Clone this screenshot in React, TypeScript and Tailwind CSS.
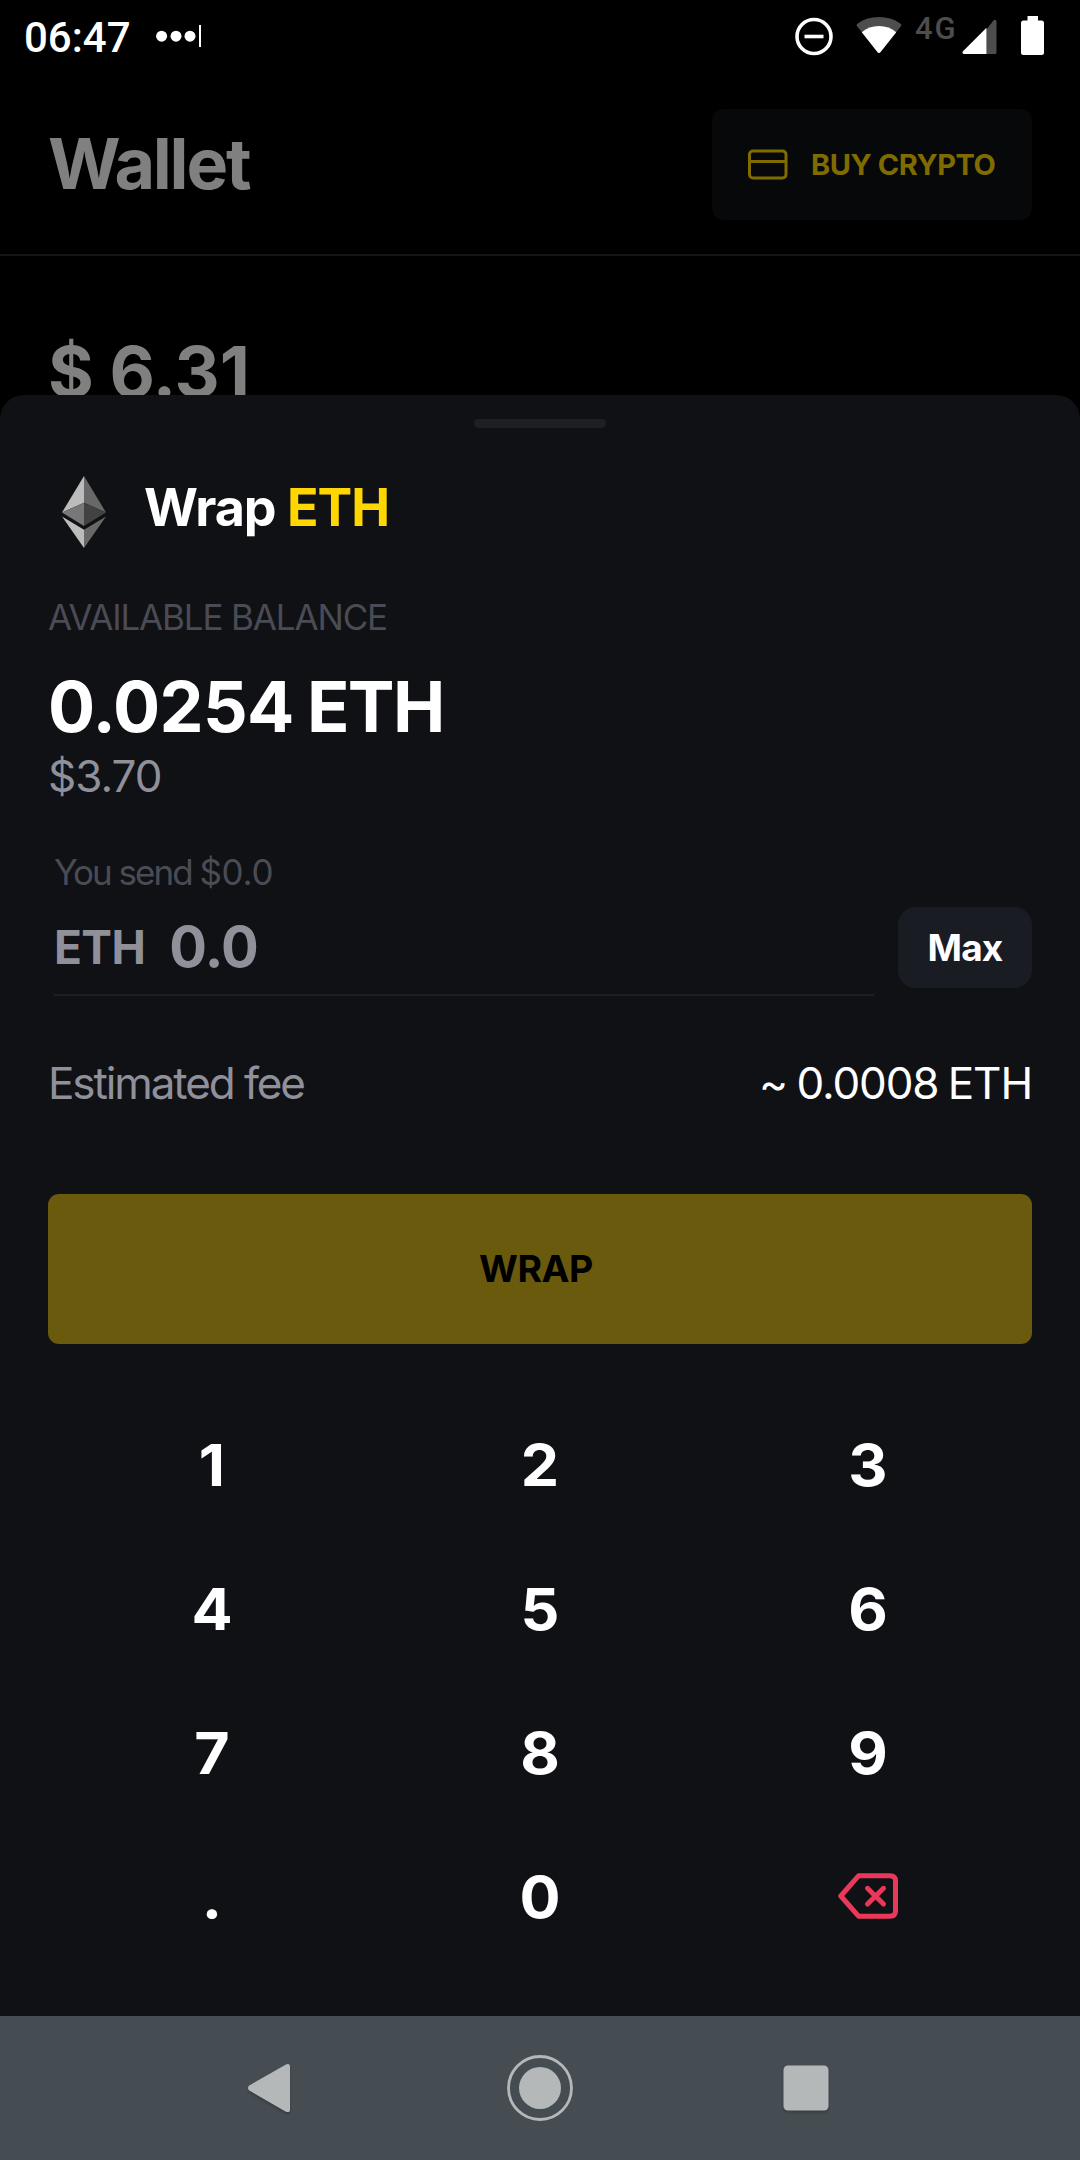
const keys = ["1", "2", "3", "4", "5", "6", "7", "8", "9", ".", "0"];

export default function App() {
  return (
    <div className="flex h-[2160px] w-[1080px] flex-col overflow-hidden bg-black font-[Inter,sans-serif] text-white">
      <div className="h-[395px] shrink-0">
        <StatusBar />
        <header className="flex h-[181px] items-center justify-between border-b-2 border-[#161616] px-12">
          <h1 className="pb-0.5 text-[70px] leading-[84px] font-bold tracking-[-2.2px] text-[#808080]">
            Wallet
          </h1>
          <button className="flex h-[111px] w-80 items-center rounded-xl bg-[#060809] pl-9 text-[#806b00]">
            <CardIcon />
            <span className="ml-[23px] text-[29px] leading-9 font-bold tracking-[-0.45px] whitespace-nowrap">
              BUY CRYPTO
            </span>
          </button>
        </header>
        <p className="mt-[74px] px-12 text-[70px] leading-[84px] font-bold text-[#808080] [word-spacing:-1px]">
          $ 6.31
        </p>
      </div>
      <WrapSheet />
      <NavBar />
    </div>
  );
}

function StatusBar() {
  return (
    <div className="flex h-[75px] items-start justify-between pt-4 pr-9 pl-6 font-[Roboto,sans-serif] font-medium">
      <div className="flex">
        <span className="text-[42px] leading-11">06:47</span>
        <svg className="ml-[25px]" width="46" height="40" fill="white">
          <circle cx="5.6" cy="20.2" r="5.5" />
          <circle cx="20" cy="20.2" r="5.5" />
          <circle cx="34" cy="20.2" r="5.5" />
          <rect x="43" y="9" width="2" height="22" />
        </svg>
      </div>
      <div className="flex items-start">
        {/* do not disturb */}
        <svg width="38" height="40" fill="none" stroke="white">
          <circle cx="19" cy="20.5" r="17" strokeWidth="3.6" />
          <path d="M9.5 20.5h19" strokeWidth="3.6" />
        </svg>
        {/* wifi */}
        <svg className="ml-[23px]" width="46" height="40">
          <path
            d="M1.3 10.5Q-.2 8.7 1.8 7.4Q11 1 23 1t21.2 6.4q2 1.3.5 3.1L24.4 36.3q-1.4 1.5-2.8 0z"
            fill="#4d4d4d"
          />
          <path
            d="M5.8 16.2Q13 10 23 10t17.2 6.2L24.4 36.3q-1.4 1.5-2.8 0z"
            fill="white"
          />
        </svg>
        <span className="ml-[13px] w-11 text-[31px] leading-[26px] tracking-[2px] text-[#4d4d4d]">
          4G
        </span>
        {/* signal */}
        <svg className="ml-[3px]" width="35" height="40">
          <path
            d="M24.5 13.5L31 5q3-2.5 3.5.5V36.5q0 1.5-1.5 1.5H24.5z"
            fill="#4d4d4d"
          />
          <path d="M24.5 11.8V38H2Q-.5 37.5 1 35.3z" fill="white" />
        </svg>
        {/* battery */}
        <svg className="ml-6" width="23" height="40" fill="white">
          <rect x="6.5" width="10.5" height="8" />
          <rect y="4.5" width="23" height="34.5" rx="2.5" />
        </svg>
      </div>
    </div>
  );
}

function WrapSheet() {
  return (
    <section className="relative flex h-[1621px] shrink-0 flex-col rounded-t-3xl bg-[#101114] px-12 pt-6">
      <div className="h-[9px] w-[132px] shrink-0 self-center rounded-[5px] bg-[#1e1f24]" />

      <div className="mt-12 flex h-[72px] items-center gap-[38px] pl-3.5">
        <EthIcon />
        <h2 className="pb-2 text-[52px] leading-[64px] font-bold tracking-[-1px]">
          Wrap <span className="text-[#ffd600]">ETH</span>
        </h2>
      </div>

      <p className="mt-[49px] text-[35px] leading-10 tracking-[-1.15px] text-[#4a4b54]">
        AVAILABLE BALANCE
      </p>
      <p className="mt-7 text-[70px] leading-[84px] font-bold">
        <span className="tracking-[-0.7px]">0.0254</span>
        <span className="tracking-[-1.7px] [word-spacing:-1.5px]"> ETH</span>
      </p>
      <p className="mt-px text-[44px] leading-[52px] tracking-[-1px] text-[#8f909a]">
        $3.70
      </p>

      <div className="mt-[50px] flex items-end justify-between pl-1.5">
        <div className="h-[144px] w-[820px] border-b-2 border-[#1e1f24]">
          <p className="text-[35px] leading-10 text-[#4a4b54]">
            <span className="tracking-[-2px]">You send </span>
            <span className="tracking-[-0.3px]">$0.0</span>
          </p>
          <div className="flex h-[102px] items-center pt-2 font-bold text-[#8f909a]">
            <span className="text-[46px] leading-[56px] tracking-[-0.6px]">
              ETH
            </span>
            <span className="ml-6 text-[56px] leading-[64px] tracking-[-0.7px]">
              0.0
            </span>
          </div>
        </div>
        <button className="mb-2 h-[81px] w-[134px] rounded-[18px] bg-[#1a1c24] text-[37px] font-bold tracking-[-0.8px]">
          Max
        </button>
      </div>

      <div className="mt-[61px] flex justify-between text-[44px] leading-[52px]">
        <span className="tracking-[-2.1px] text-[#8f909a]">Estimated fee</span>
        <span className="tracking-[-1.1px] [word-spacing:-2px]">
          ~ 0.0008 ETH
        </span>
      </div>

      <button className="mt-[85px] h-[150px] shrink-0 rounded-[11px] bg-[#695a0e] pr-2 text-[37.5px] font-bold tracking-[-0.5px] text-black">
        WRAP
      </button>

      <div className="mt-[49px] grid h-[576px] grid-cols-3 grid-rows-4">
        {keys.map((key) => (
          <button
            key={key}
            className="flex scale-x-105 items-center justify-center text-[58px] font-bold"
          >
            {key}
          </button>
        ))}
        <button className="flex items-center justify-center pb-0.5">
          <BackspaceIcon />
        </button>
      </div>
    </section>
  );
}

function NavBar() {
  return (
    <nav className="h-36 shrink-0 bg-[#454d52]">
      <svg width="1080" height="144" fill="#b4b8b9">
        <g className="drop-shadow-[0_2px_1px_rgba(0,0,0,0.2)]">
          <path d="M249.3 69.5L285.5 48.7Q290 46.7 290 51V93.2Q290 97.5 285.5 95.4L249.3 74.5Q246.5 72 249.3 69.5z" />
          <rect x="783.5" y="49.5" width="45" height="45" rx="4.5" />
        </g>
        <circle cx="540" cy="72" r="21" />
        <circle
          cx="540"
          cy="72"
          r="31.5"
          fill="none"
          stroke="#b4b8b9"
          strokeWidth="2.8"
        />
      </svg>
    </nav>
  );
}

function CardIcon() {
  return (
    <svg width="40" height="32" fill="none" stroke="currentColor" strokeWidth="3">
      <rect x="1.5" y="2" width="36.5" height="27" rx="3.5" />
      <path d="M1.5 12.5h36.5" />
    </svg>
  );
}

function EthIcon() {
  return (
    <svg width="44" height="72" viewBox="0 0 44 72">
      <path d="M22 0L0 36.5 22 26.7z" fill="#bcbcbc" />
      <path d="M22 0L44 36.5 22 26.7z" fill="#686868" />
      <path d="M0 36.5L22 26.7V50z" fill="#777777" />
      <path d="M44 36.5L22 26.7V50z" fill="#424242" />
      <path d="M0 40.5L22 53.7V72z" fill="#bcbcbc" />
      <path d="M44 40.5L22 53.7V72z" fill="#686868" />
    </svg>
  );
}

function BackspaceIcon() {
  return (
    <svg
      width="60"
      height="46"
      fill="none"
      stroke="#ea385a"
      strokeWidth="5"
      strokeLinecap="round"
      strokeLinejoin="round"
    >
      <path d="M20.5 2.8H52Q57.5 2.8 57.5 8V38Q57.5 43.2 52 43.2H20.5L2.8 23z" />
      <path d="M29.5 15.3L45.5 31M45.5 15.3L29.5 31" />
    </svg>
  );
}
